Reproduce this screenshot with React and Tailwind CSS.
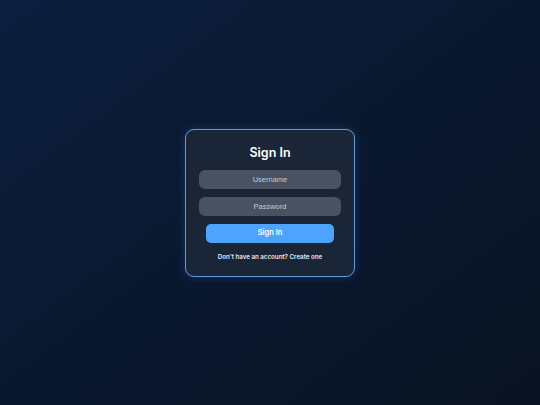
export default function App() {
  return (
    <div className="flex h-[405px] w-[540px] items-center justify-center bg-gradient-to-br from-[#0c1e3e] via-[#0a182f] to-[#091322] font-['Inter',sans-serif]">
      <div className="flex w-[170px] flex-col rounded-[9px] border border-[#5a9be6] bg-[#1b2538] px-[13px] pb-[13px] pt-[13px] shadow-[0_0_10px_rgba(77,163,255,0.2)]">
        <h1 className="text-center text-[12.5px] font-semibold leading-[20px] text-white">Sign In</h1>
        <input
          placeholder="Username"
          className="mt-[7px] h-[19px] w-full rounded-[6px] bg-[#4a5262] text-center font-['Liberation_Sans',sans-serif] text-[7.5px] text-white outline-none placeholder:text-[#c3c8d0]"
        />
        <input
          type="password"
          placeholder="Password"
          className="mt-[8px] h-[19px] w-full rounded-[6px] bg-[#4a5262] text-center font-['Liberation_Sans',sans-serif] text-[7.5px] text-white outline-none placeholder:text-[#c3c8d0]"
        />
        <button className="mx-[7px] mt-[8px] h-[19px] rounded-[5px] bg-[#4da3ff] text-[7.5px] font-semibold text-white">
          Sign In
        </button>
        <p className="mt-[8px] text-center text-[6.2px] font-semibold leading-[12px] text-[#e6e9ef]">
          Don't have an account? Create one
        </p>
      </div>
    </div>
  );
}
